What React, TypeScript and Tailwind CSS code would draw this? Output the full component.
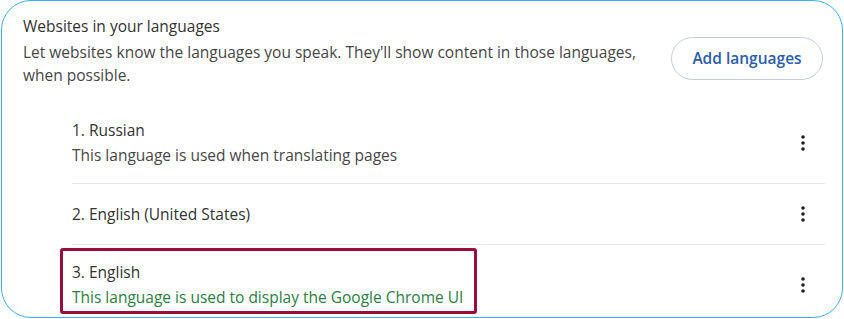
import { Fragment } from "react";

type Lang = { name: string; note?: string; green?: boolean };

const langs: Lang[] = [
  { name: "1. Russian", note: "This language is used when translating pages" },
  { name: "2. English (United States)" },
  {
    name: "3. English",
    note: "This language is used to display the Google Chrome UI",
    green: true,
  },
];

function Kebab() {
  return (
    <svg width="4" height="16" viewBox="0 0 4 16" className="fill-[#1f1f1f]">
      <circle cx="2" cy="2" r="1.8" />
      <circle cx="2" cy="8" r="1.8" />
      <circle cx="2" cy="14" r="1.8" />
    </svg>
  );
}

export default function App() {
  return (
    <div className="w-[844px] h-[319px] bg-white font-['Open_Sans',sans-serif] overflow-hidden">
      <div className="relative ml-px w-[842px] h-[318px] rounded-[30px] border border-[#3cb0f2] bg-white overflow-hidden">
        {/* Header */}
        <div className="flex items-start pl-[21px] pr-[19px] pt-[14px]">
          <div className="flex-1">
            <div className="text-[15.5px] leading-[23px] text-[#333]">
              Websites in your languages
            </div>
            <p className="mt-[3px] w-[630px] text-[15.5px] leading-[23px] text-[#474747]">
              Let websites know the languages you speak. They'll show content in those
              languages, when possible.
            </p>
          </div>
          <button className="mt-[22px] h-[43px] w-[152px] rounded-full border border-[#c4cdda] text-[15.5px] font-semibold text-[#2a5db0]">
            Add languages
          </button>
        </div>

        {/* Language list */}
        <div className="mt-[16px] pl-[70px] pr-[17px]">
          {langs.map((l, i) => (
            <Fragment key={l.name}>
              {i > 0 && <div className="h-px bg-[#e6e6e6]" />}
              <div
                className={
                  l.note
                    ? "flex h-[80px] items-center"
                    : "flex h-[60px] items-center"
                }
              >
                <div className="flex-1">
                  <div className="text-[15.5px] leading-[25px] text-[#333]">{l.name}</div>
                  {l.note && (
                    <div
                      className={
                        l.green
                          ? "text-[15.5px] leading-[25px] text-[#2b8044]"
                          : "text-[15.5px] leading-[25px] text-[#474747]"
                      }
                    >
                      {l.note}
                    </div>
                  )}
                </div>
                <div className="flex w-[42px] justify-center pr-[2px]">
                  <Kebab />
                </div>
              </div>
            </Fragment>
          ))}
        </div>

        {/* highlight annotation */}
        <div className="absolute left-[58px] top-[247px] h-[66px] w-[417px] rounded-[3px] border-[3px] border-[#9b0b3b]" />
      </div>
    </div>
  );
}
